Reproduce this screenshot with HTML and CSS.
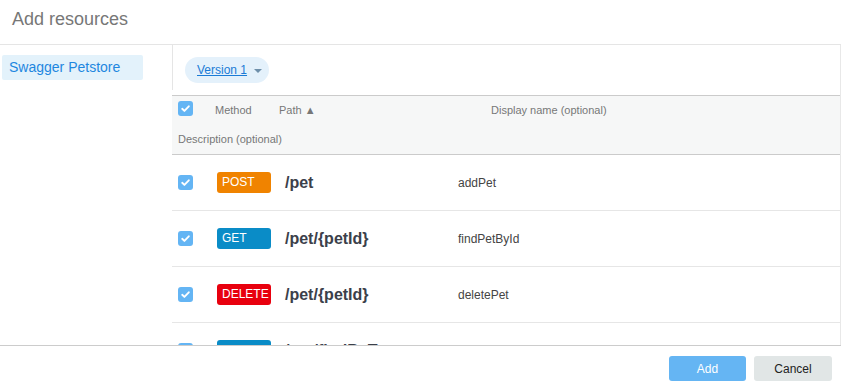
FILE: index.html
```html
<!DOCTYPE html>
<html lang="en">

<head>
    <meta charset="UTF-8">
    <title>Add resources</title>
    <link rel="stylesheet" href="styles.css">
</head>

<body>

    <h1 class="titel">Add resources</h1>

    <main class="indhold">
        <nav class="sidebar">
            <div class="kilde valgt">Swagger Petstore</div>
        </nav>

        <section class="panel">
            <div class="toolbar">
                <button class="version"><span>Version 1</span><i class="caret"></i></button>
            </div>

            <div class="tabel-hoved">
                <div class="celle cb-celle"><span class="cb"></span></div>
                <div class="celle h-metode">Method</div>
                <div class="celle h-sti">Path &#9650;</div>
                <div class="celle h-navn">Display name (optional)</div>
                <div class="celle h-beskrivelse">Description (optional)</div>
            </div>

            <div class="rækker">
                <div class="række">
                    <span class="cb"></span>
                    <span class="metode post">POST</span>
                    <span class="sti">/pet</span>
                    <span class="navn">addPet</span>
                </div>
                <div class="række">
                    <span class="cb"></span>
                    <span class="metode get">GET</span>
                    <span class="sti">/pet/{petId}</span>
                    <span class="navn">findPetById</span>
                </div>
                <div class="række">
                    <span class="cb"></span>
                    <span class="metode delete">DELETE</span>
                    <span class="sti">/pet/{petId}</span>
                    <span class="navn">deletePet</span>
                </div>
                <div class="række">
                    <span class="cb"></span>
                    <span class="metode get">GET</span>
                    <span class="sti">/pet/findByTags</span>
                    <span class="navn">findPetsByTags</span>
                </div>
            </div>
        </section>
    </main>

    <footer class="knapper">
        <button class="knap tilfoej">Add</button>
        <button class="knap annuller">Cancel</button>
    </footer>

</body></html>
```

FILE: styles.css
```css
* {
    margin: 0px;
    padding: 0px;
    box-sizing: border-box;
}

body {
    height: 100vh;
    display: flex;
    flex-direction: column;
    overflow: hidden;
    font-family: "Liberation Sans", Arial, sans-serif;
    background: #fff;
}

.titel {
    height: 45px;
    flex-shrink: 0;
    padding: 8px 0 0 12px;
    font-size: 18px;
    line-height: 22px;
    font-weight: normal;
    color: #777;
    border-bottom: 1px solid #e5e5e5;
}

.indhold {
    flex: 1;
    display: flex;
    overflow: hidden;
}

.sidebar {
    width: 172px;
    flex-shrink: 0;
    padding: 10px 29px 0 2px;
}

.kilde {
    height: 25px;
    line-height: 25px;
    padding-left: 7px;
    font-size: 14px;
    color: #1e87e0;
    border-radius: 2px;
}

.kilde.valgt {
    background: #e3f2fb;
}

.panel {
    flex: 1;
    display: flex;
    flex-direction: column;
    border-right: 1px solid #e8e8e8;
    overflow: hidden;
}

.toolbar {
    height: 45px;
    flex-shrink: 0;
    margin-bottom: 5px;
    padding: 12px 0 0 12px;
    border-left: 1px solid #e5e5e5;
}

.version {
    height: 26px;
    width: 84px;
    padding-left: 12px;
    display: flex;
    align-items: center;
    border: none;
    border-radius: 13px;
    background: #e4f1fb;
    font-family: inherit;
    font-size: 12px;
    color: #1a7bd6;
}

.version span {
    text-decoration: underline;
}

.caret {
    margin-left: 7px;
    margin-top: 1px;
    border-left: 4px solid transparent;
    border-right: 4px solid transparent;
    border-top: 4px solid #6e8faa;
}

.tabel-hoved {
    flex-shrink: 0;
    display: grid;
    grid-template-columns: 37px 64px 212px 1fr;
    grid-template-rows: 28px 30px;
    padding-left: 6px;
    background: #f6f7f7;
    border-top: 1px solid #cbcbcb;
    border-bottom: 1px solid #cbcbcb;
    font-size: 11px;
    color: #777;
}

.celle {
    display: flex;
    align-items: center;
}

.cb-celle {
    padding-bottom: 3px;
}

.h-beskrivelse {
    grid-column: 1 / 5;
}

.cb {
    width: 15px;
    height: 15px;
    flex-shrink: 0;
    border-radius: 3px;
    background: #64b5f4 url("data:image/svg+xml,%3Csvg xmlns='http://www.w3.org/2000/svg' viewBox='0 0 15 15'%3E%3Cpath d='M4.2 7.8l2.2 2.1 4.4-4.6' fill='none' stroke='%23fff' stroke-width='1.9' stroke-linecap='round' stroke-linejoin='round'/%3E%3C/svg%3E") no-repeat center;
}

.rækker {
    flex: 1;
    overflow: hidden;
}

.række {
    height: 56px;
    display: flex;
    align-items: center;
    padding-left: 6px;
    border-bottom: 1px solid #e6e6e6;
}

.metode {
    width: 54px;
    height: 21px;
    margin-left: 24px;
    padding-left: 5px;
    line-height: 21px;
    border-radius: 3px;
    font-size: 12px;
    color: #fff;
}

.post {
    background: #f08300;
}

.get {
    background: #0a8cc7;
}

.delete {
    background: #e8000e;
}

.sti {
    width: 187px;
    padding-left: 14px;
    font-size: 16px;
    font-weight: bold;
    color: #3b404a;
}

.navn {
    font-size: 12px;
    color: #444;
}

.knapper {
    height: 45px;
    flex-shrink: 0;
    display: flex;
    justify-content: flex-end;
    gap: 8px;
    padding: 10px 9px 0 0;
    border-top: 1px solid #cccccc;
}

.knap {
    width: 78px;
    height: 25px;
    border: none;
    border-radius: 3px;
    font-family: inherit;
    font-size: 12px;
}

.tilfoej {
    width: 77px;
    background: #65b5f3;
    color: #fff;
}

.annuller {
    background: #e1e6e6;
    color: #222;
}
```
